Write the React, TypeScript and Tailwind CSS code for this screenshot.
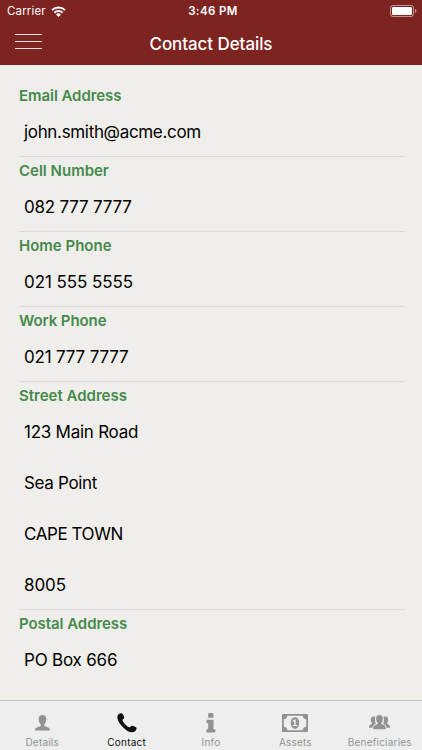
import React from 'react';
import clsx from 'clsx';

interface Field {
  label: string;
  labelClass?: string;
  lines: { text: string; tracking?: string }[];
}

const fields: Field[] = [
  {
    label: 'Email Address',
    labelClass: 'tracking-[-0.06px]',
    lines: [{ text: 'john.smith@acme.com', tracking: 'tracking-[-0.33px]' }],
  },
  { label: 'Cell Number', lines: [{ text: '082 777 7777', tracking: 'tracking-[-0.2px]' }] },
  { label: 'Home Phone', lines: [{ text: '021 555 5555', tracking: 'tracking-[-0.08px]' }] },
  { label: 'Work Phone', labelClass: 'tracking-[-0.08px]', lines: [{ text: '021 777 7777', tracking: 'tracking-[-0.18px]' }] },
  {
    label: 'Street Address',
    lines: [
      { text: '123 Main Road', tracking: 'tracking-[-0.25px]' },
      { text: 'Sea Point', tracking: 'tracking-[-0.33px]' },
      { text: 'CAPE TOWN', tracking: 'tracking-[-0.42px]' },
      { text: '8005', tracking: 'tracking-[-0.1px]' },
    ],
  },
  {
    label: 'Postal Address',
    labelClass: 'tracking-[-0.06px]',
    lines: [{ text: 'PO Box 666', tracking: 'tracking-[-0.2px]' }],
  },
];

const PersonIcon = () => (
  <svg className="w-[15px] h-4" viewBox="0 0 15 16" fill="currentColor">
    <path d="M7.500 0C5 0 3.700 1.300 3.700 3.800c0 2.400.7 4 1.700 5.100.6.900.5 2-.3 2.300L1.800 12.600C.5 13.100.1 13.800 0 15.500h15c-.1-1.700-.5-2.400-1.800-2.900L9.900 11.200c-.8-.3-.9-1.400-.3-2.300 1-1.100 1.700-2.700 1.700-5.100C11.300 1.300 10 0 7.500 0z" />
  </svg>
);

const PhoneIcon = () => (
  <svg className="w-5 h-5" viewBox="0 0 20 20" fill="currentColor">
    <path d="M1.900 1.100C3.200.2 4.700.1 5.300.7 6.300 1.700 7.500 4 7.200 5 6.900 5.900 5.400 6.300 5.500 7.200c.2 1.800 4.600 6.600 6.700 7 1.100.2 1.700-1.300 2.800-1.500 1.200-.2 3.700 1 4.300 1.900.6 1-.1 2.700-1.300 3.700-1.500 1.300-4.600 1.300-7.100-.1C7.500 16.400 3 11.500 1.200 7.800.1 5.400-.1 2.500 1.900 1.100z" />
  </svg>
);

const InfoIcon = () => (
  <svg className="w-[10px] h-5" viewBox="0 0 10 20" fill="currentColor">
    <rect x="2.200" y="0" width="5.200" height="4.800" rx="0.900" />
    <path d="M1.200 6.700h5.600q.7 0 .7.700v8.800h1q.9 0 .9.800v1.700q0 .8-.9.800H1.100q-.8 0-.8-.8V17q0-.8.8-.8h1.100V10H1.200q-.8 0-.8-.8V7.500q0-.8.8-.8z" />
  </svg>
);

const MoneyIcon = () => (
  <svg className="w-[26px] h-[18px]" viewBox="0 0 26 18" fill="currentColor">
    <path fillRule="evenodd" d="M1 0h24q1 0 1 1v16q0 1-1 1H1q-1 0-1-1V1q0-1 1-1zM5.300 1.800Q5 5 1.800 5.300v7.400Q5 13 5.300 16.200h15.400Q21 13 24.200 12.700V5.300Q21 5 20.700 1.800z" />
    <path fillRule="evenodd" d="M13 3.200c2.700 0 4.200 2.600 4.200 5.800s-1.500 5.800-4.200 5.800S8.800 12.200 8.800 9 10.300 3.200 13 3.200zM12.200 5.400 10.500 7l.9 1 .8-.7v3.600h-1.500v1.200h4.500v-1.200h-1.500V5.400z" />
  </svg>
);

const GroupIcon = () => (
  <svg className="w-[21px] h-[15px]" viewBox="0 0 21 15" fill="currentColor">
    <path d="M10.500 0C8.300 0 7.100 1.300 7.100 3.500c0 1.800.5 3 1.300 3.900.5.600.4 1.500-.2 1.800L5.700 10.300c-1.100.5-1.400 1.400-1.400 3.900h12.400c0-2.500-.3-3.400-1.400-3.900l-2.500-1.100c-.6-.3-.7-1.200-.2-1.800.8-.9 1.300-2.100 1.300-3.900C13.900 1.300 12.700 0 10.500 0z" />
    <path d="M4.900 1.600C3 1.500 1.800 2.600 1.800 4.700c0 1.500.5 2.400 1 3.100.3.500.2 1-.2 1.200l-1.400.7C.3 10.200 0 10.900 0 12.800h3.500c.2-1.900.7-2.800 1.800-3.400l1.500-.7C6.300 7.500 6 5.700 6 4.300c0-1 .1-1.600.5-2.300-.4-.3-1-.4-1.600-.4z" />
    <path d="M16.100 1.600c1.900-.1 3.100 1 3.100 3.100 0 1.500-.5 2.400-1 3.100-.3.500-.2 1 .2 1.200l1.400.7c.9.500 1.200 1.200 1.200 3.100h-3.500c-.2-1.900-.7-2.800-1.800-3.400l-1.500-.7c.5-1.200.8-3 .8-4.400 0-1-.1-1.600-.5-2.300.4-.3 1-.4 1.600-.4z" />
  </svg>
);

const tabs = [
  { label: 'Details', Icon: PersonIcon },
  { label: 'Contact', Icon: PhoneIcon, active: true },
  { label: 'Info', Icon: InfoIcon },
  { label: 'Assets', Icon: MoneyIcon },
  { label: 'Beneficiaries', Icon: GroupIcon },
];

const StatusBar = () => (
  <div className="grid grid-cols-[1fr_auto_1fr] items-center h-[22px] pl-[7px] pr-[5px] text-[11.500px] leading-[22px]">
    <div className="flex items-center gap-[5px]">
      <span className="tracking-[0.15px]">Carrier</span>
      <svg className="w-[15px] h-[11px]" viewBox="0 0 15 11" fill="none" stroke="currentColor" strokeWidth="2">
        <path d="M1 4.100a9.200 9.200 0 0 1 13 0" />
        <path d="M3.400 6.700a5.800 5.800 0 0 1 8.200 0" />
        <path d="M7.500 11 5 8.500a3.500 3.500 0 0 1 5 0z" fill="currentColor" stroke="none" />
      </svg>
    </div>
    <div className="pl-0.5 text-center font-semibold tracking-[0.4px]">3:46 PM</div>
    <svg className="w-[27px] h-3 justify-self-end" viewBox="0 0 27 12">
      <rect x="0.500" y="0.500" width="23" height="11" rx="2.500" fill="none" stroke="#fff" strokeOpacity="0.500" />
      <rect x="2" y="2" width="20" height="8" rx="1.200" fill="#fff" />
      <path d="M25 4v4c1-.4 1.500-1.100 1.500-2S26 4.400 25 4z" fill="#fff" fillOpacity="0.500" />
    </svg>
  </div>
);

const App: React.FC = () => {
  return (
    <div className="flex flex-col h-[750px] w-[422px] overflow-hidden bg-[#efeeea] font-['Inter',sans-serif] text-black">
      <header className="h-[65px] shrink-0 bg-[#7d2421] text-white">
        <StatusBar />
        <div className="grid grid-cols-[1fr_auto_1fr] items-center h-[43px]">
          <div className="ml-[15px] mb-1 flex flex-col gap-[6px]">
            <div className="w-[27px] h-px bg-white/85" />
            <div className="w-[27px] h-px bg-white/85" />
            <div className="w-[27px] h-px bg-white/85" />
          </div>
          <h1 className="pt-0.5 text-[17px] font-medium tracking-[-0.08px]">Contact Details</h1>
        </div>
      </header>

      <main className="flex-1 overflow-hidden pt-[17px] pl-[19px] pr-[17px]">
        {fields.map((field) => (
          <section key={field.label} className="border-b border-[#dddcda] last:border-b-0">
            <h2 className={clsx('h-[26px] pt-[2px] text-[15px] leading-6 font-semibold text-[#458a4c]', field.labelClass)}>
              {field.label}
            </h2>
            <div className="pl-[5px] pb-[3px] pt-[3px] flex flex-col gap-[9px]">
              {field.lines.map((line) => (
                <p key={line.text} className={clsx('h-[42px] leading-[42px] text-[17px]', line.tracking)}>{line.text}</p>
              ))}
            </div>
          </section>
        ))}
      </main>

      <nav className="grid grid-cols-5 h-[50px] shrink-0 border-t border-[#c4c4c3] bg-[#eeeeee]">
        {tabs.map(({ label, Icon, active }) => (
          <div key={label} className={clsx('flex flex-col items-center', active ? 'text-[#111111]' : 'text-[#929292]')}>
            <div className="flex items-center justify-center h-[34px] pt-[9px]">
              <Icon />
            </div>
            <span className="text-[10px] leading-[14px] tracking-[0.2px]">{label}</span>
          </div>
        ))}
      </nav>
    </div>
  );
};

export default App;
